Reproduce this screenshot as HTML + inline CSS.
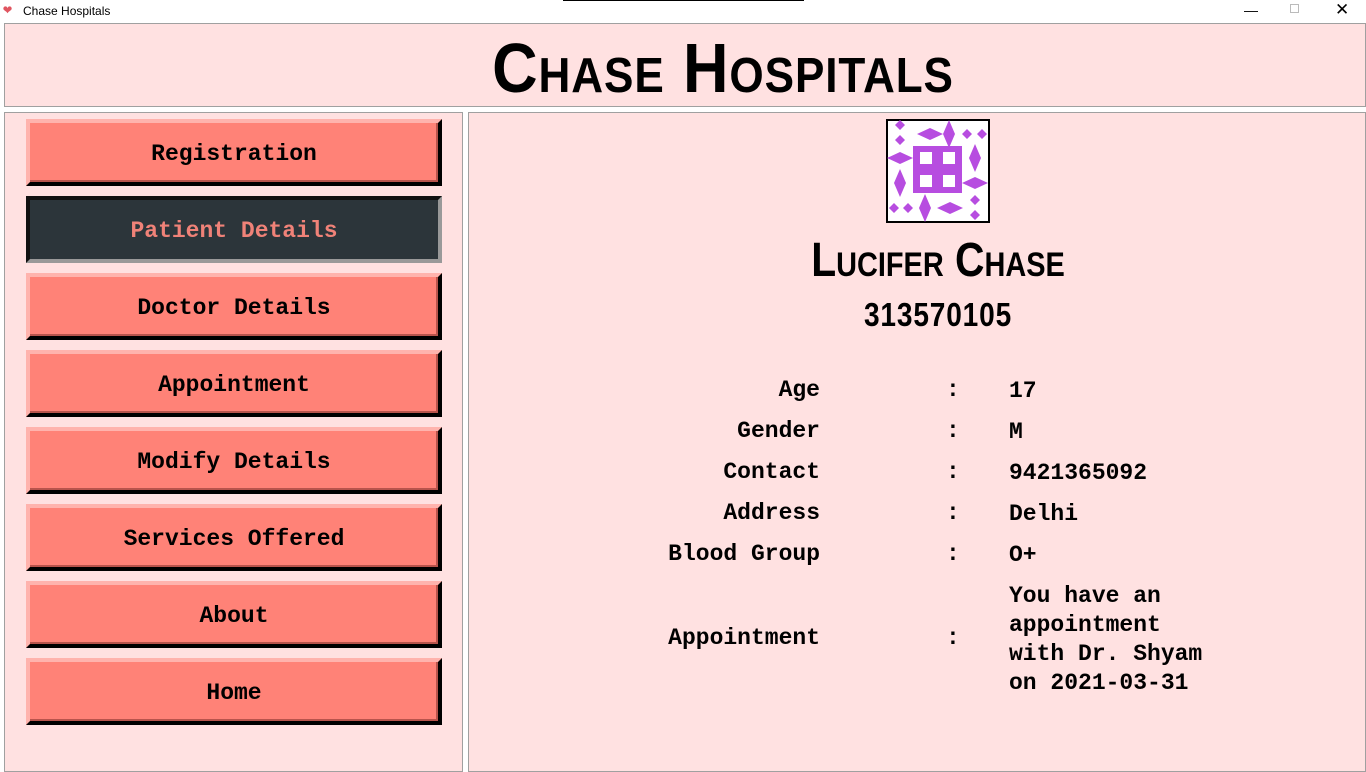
<!DOCTYPE html><html><head><style>
*{margin:0;padding:0;box-sizing:border-box}
body{width:1366px;height:768px;background:#fff;position:relative;overflow:hidden;font-family:"Liberation Mono","DejaVu Sans Mono",monospace;font-weight:bold;color:#000}
.a{position:absolute}
.panel{background:#ffe1e1;border:1px solid #a0a0a0}
.btn{position:absolute;left:26px;width:416px;height:67px;background:#ff8277;border-top:4px solid #ffb3ad;border-left:4px solid #ffb3ad;border-right:4px solid #000;border-bottom:4px solid #000;font-size:23px;display:flex;align-items:center;justify-content:center;padding-top:2px;box-shadow:inset -2px -2px 0 #b8544c}
.sel{background:#2c353a;color:#f08278;border-top:4px solid #111;border-left:4px solid #111;border-right:4px solid #999;border-bottom:4px solid #999;box-shadow:none}
.big{font-family:"Liberation Sans Narrow","Liberation Sans",sans-serif;font-variant:small-caps;font-weight:bold;text-align:center;transform-origin:center}
.lb{position:absolute;width:200px;left:620px;text-align:right;font-size:23px}
.c{position:absolute;left:946px;font-size:23px}
.v{position:absolute;left:1009px;font-size:23px;line-height:29px}
</style></head><body>
<div class="a" style="left:3px;top:4px;width:16px;height:14px;color:#e05560;font-size:15px;line-height:14px">&#10084;</div>
<div class="a" style="left:23px;top:4px;font-family:'Liberation Sans',sans-serif;font-weight:normal;font-size:12px">Chase Hospitals</div>
<div class="a" style="left:563px;top:0;width:241px;height:1px;background:#000"></div>
<div class="a" style="left:1244px;top:2px;font:normal 14px 'Liberation Sans',sans-serif">&#8212;</div>
<div class="a" style="left:1290px;top:4px;width:9px;height:9px;border:1px solid #bbb"></div>
<div class="a" style="left:1335px;top:0px;font:normal 17px 'Liberation Sans',sans-serif">&#10005;</div>
<div class="a panel" style="left:4px;top:23px;width:1362px;height:84px"></div>
<div class="a big" style="left:383px;top:26px;width:680px;font-size:70px;line-height:84px;transform:scaleX(0.9);letter-spacing:1px">Chase Hospitals</div>
<div class="a panel" style="left:4px;top:112px;width:459px;height:660px"></div>
<div class="a panel" style="left:468px;top:112px;width:898px;height:660px"></div>
<div class="btn" style="top:119px">Registration</div>
<div class="btn sel" style="top:196px">Patient Details</div>
<div class="btn" style="top:273px">Doctor Details</div>
<div class="btn" style="top:350px">Appointment</div>
<div class="btn" style="top:427px">Modify Details</div>
<div class="btn" style="top:504px">Services Offered</div>
<div class="btn" style="top:581px">About</div>
<div class="btn" style="top:658px">Home</div>
<svg class="a" style="left:886px;top:119px" width="104" height="104" viewBox="0 0 104 104">
<rect x="1" y="1" width="102" height="102" fill="#fff" stroke="#000" stroke-width="2"/>
<g fill="#b74de0">
<rect x="27" y="27" width="49" height="47"/>
<g fill="#fff"><rect x="34" y="33" width="12" height="12"/><rect x="57" y="33" width="12" height="12"/><rect x="34" y="56" width="12" height="12"/><rect x="57" y="56" width="12" height="12"/></g>
<path d="M14 1l5 5-5 5-5-5zM14 16l5 5-5 5-5-5zM31 15l13-6 13 6-13 6zM63 1l6 14-6 14-6-14zM81 10l5 5-5 5-5-5zM96 10l5 5-5 5-5-5z"/>
<path d="M1 39l13-6 13 6-13 6zM89 25l6 14-6 14-6-14zM14 50l6 14-6 14-6-14zM76 64l13-6 13 6-13 6z"/>
<path d="M8 84l5 5-5 5-5-5zM22 84l5 5-5 5-5-5zM39 75l6 14-6 14-6-14zM51 89l13-6 13 6-13 6zM89 76l5 5-5 5-5-5zM89 91l5 5-5 5-5-5z"/>
</g></svg>
<div class="a big" style="left:738px;top:234px;width:400px;font-size:48px;line-height:54px;transform:scaleX(0.85)">Lucifer Chase</div>
<div class="a big" style="left:838px;top:296px;width:200px;font-size:33px;line-height:38px;transform:scaleX(0.85);letter-spacing:1px">313570105</div>
<div class="lb" style="top:377px">Age</div><div class="c" style="top:377px">:</div><div class="v" style="top:377px">17</div>
<div class="lb" style="top:418px">Gender</div><div class="c" style="top:418px">:</div><div class="v" style="top:418px">M</div>
<div class="lb" style="top:459px">Contact</div><div class="c" style="top:459px">:</div><div class="v" style="top:459px">9421365092</div>
<div class="lb" style="top:500px">Address</div><div class="c" style="top:500px">:</div><div class="v" style="top:500px">Delhi</div>
<div class="lb" style="top:541px">Blood Group</div><div class="c" style="top:541px">:</div><div class="v" style="top:541px">O+</div>
<div class="lb" style="top:625px">Appointment</div><div class="c" style="top:625px">:</div>
<div class="v" style="top:582px">You have an<br>appointment<br>with Dr. Shyam<br>on 2021-03-31</div>
</body></html>
